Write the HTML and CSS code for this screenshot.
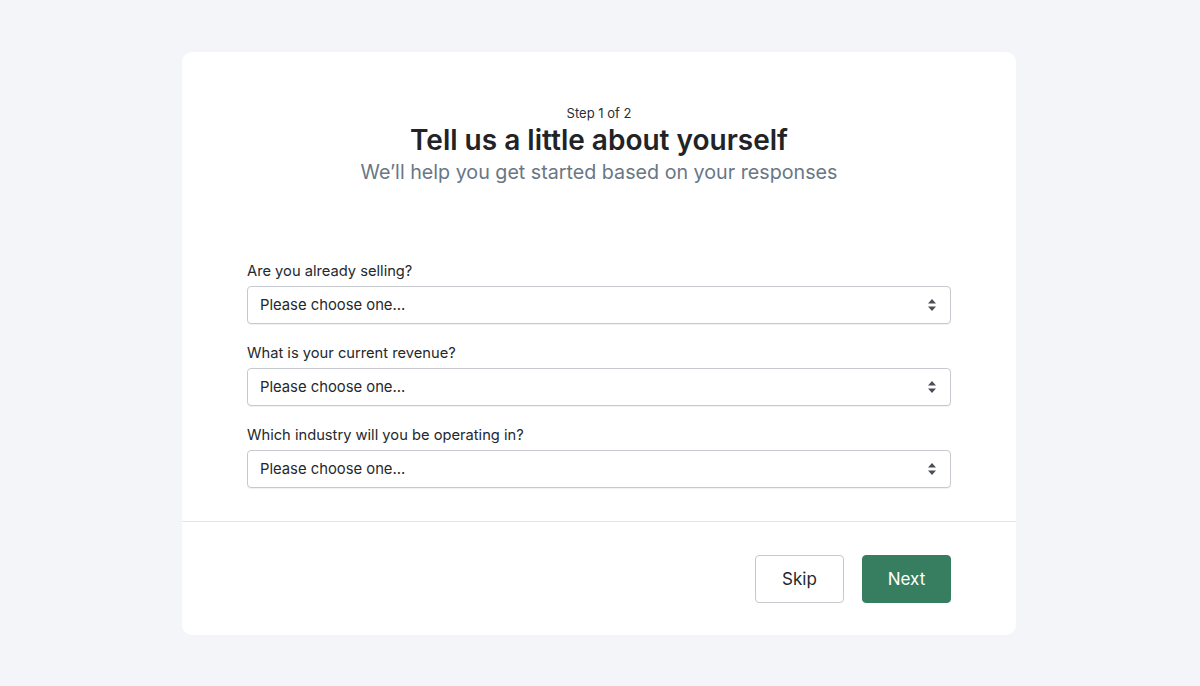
FILE: index.html
```html
<!DOCTYPE html>
<html lang="en">
<head>
    <meta charset="UTF-8">
    <meta name="viewport" content="width=device-width, initial-scale=1.0">
    <title>Tell us a little about yourself</title>
    <link rel="stylesheet" href="styles.css">
</head>
<body>
    <div class="card">
        <div class="card-body">
            <div class="intro">
                <p class="step">Step 1 of 2</p>
                <h1>Tell us a little about yourself</h1>
                <p class="subtitle">We’ll help you get started based on your responses</p>
            </div>

            <div class="field">
                <label for="selling">Are you already selling?</label>
                <div class="select-wrap">
                    <select id="selling">
                        <option>Please choose one...</option>
                    </select>
                    <svg class="arrows" width="10" height="14" viewBox="0 0 10 14"><path d="M5 1 L9 5.5 H1 Z M5 13 L9 8.5 H1 Z" fill="#4a4f55"/></svg>
                </div>
            </div>

            <div class="field">
                <label for="revenue">What is your current revenue?</label>
                <div class="select-wrap">
                    <select id="revenue">
                        <option>Please choose one...</option>
                    </select>
                    <svg class="arrows" width="10" height="14" viewBox="0 0 10 14"><path d="M5 1 L9 5.5 H1 Z M5 13 L9 8.5 H1 Z" fill="#4a4f55"/></svg>
                </div>
            </div>

            <div class="field">
                <label for="industry">Which industry will you be operating in?</label>
                <div class="select-wrap">
                    <select id="industry">
                        <option>Please choose one...</option>
                    </select>
                    <svg class="arrows" width="10" height="14" viewBox="0 0 10 14"><path d="M5 1 L9 5.5 H1 Z M5 13 L9 8.5 H1 Z" fill="#4a4f55"/></svg>
                </div>
            </div>
        </div>

        <div class="card-footer">
            <button class="btn btn-plain">Skip</button>
            <button class="btn btn-primary">Next</button>
        </div>
    </div>
</body>
</html>
```

FILE: styles.css
```css
body {
    font-family: Inter, "Noto Sans", sans-serif;
    margin: 0;
    padding: 52px 2px 0 0;
    background-color: #f4f5f8;
    color: #212326;
}

.card {
    width: 834px;
    margin: 0 auto;
    background-color: #fff;
    border-radius: 10px;
}

.card-body {
    padding: 53px 65px 33px;
    border-bottom: 1px solid #e3e5e8;
}

.intro {
    text-align: center;
    margin-bottom: 75px;
}

.step {
    margin: 0;
    font-size: 13px;
    line-height: 16px;
    color: #2b2e33;
}

h1 {
    margin: 2px 0 0;
    font-size: 28px;
    line-height: 34px;
    font-weight: 600;
}

.subtitle {
    margin: 0;
    font-size: 19.7px;
    line-height: 30px;
    color: #697785;
}

.field {
    margin-top: 20px;
}

.field:first-of-type {
    margin-top: 0;
}

label {
    display: block;
    font-size: 14.7px;
    line-height: 18px;
    margin-bottom: 6px;
    color: #25282c;
}

.select-wrap {
    position: relative;
}

select {
    appearance: none;
    -webkit-appearance: none;
    width: 100%;
    height: 38px;
    padding: 0 40px 0 12px;
    font-family: inherit;
    font-size: 14.8px;
    color: #25282c;
    background-color: #fff;
    border: 1px solid #c6cace;
    border-radius: 4px;
    box-shadow: 0 1px 0 rgba(0, 0, 0, 0.05);
}

.arrows {
    position: absolute;
    right: 14px;
    top: 12px;
    pointer-events: none;
}

.card-footer {
    display: flex;
    justify-content: flex-end;
    gap: 18px;
    padding: 33px 65px 32px;
}

.btn {
    width: 89px;
    height: 48px;
    font-family: inherit;
    font-size: 17px;
    border-radius: 4px;
    cursor: pointer;
}

.btn-plain {
    background-color: #fff;
    color: #25282c;
    border: 1px solid #c6cace;
}

.btn-primary {
    background-color: #367e5f;
    color: #fff;
    border: 1px solid #367e5f;
}
```
